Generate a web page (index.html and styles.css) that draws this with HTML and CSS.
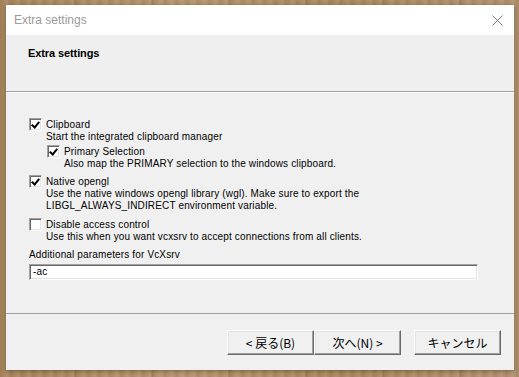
FILE: index.html
```html
<!DOCTYPE html>
<html lang="ja">
<head>
    <meta charset="UTF-8">
    <title>Extra settings</title>
    <link rel="stylesheet" href="styles.css">
</head>
<body>
    <div class="window">
        <!-- Title bar -->
        <div class="titlebar">
            <span class="title">Extra settings</span>
            <svg class="close" width="11" height="11" viewBox="0 0 11 11">
                <path d="M0.5 0.5 L10.5 10.5 M10.5 0.5 L0.5 10.5" stroke="#7a7a7a" stroke-width="1" fill="none"/>
            </svg>
        </div>

        <!-- Wizard header -->
        <div class="header">
            <h1>Extra settings</h1>
        </div>

        <!-- Options -->
        <div class="content">
            <div class="option">
                <span class="check checked"></span>
                <div class="text">
                    <div class="label">Clipboard</div>
                    <div class="desc">Start the integrated clipboard manager</div>
                    <div class="option sub">
                        <span class="check checked"></span>
                        <div class="text">
                            <div class="label">Primary Selection</div>
                            <div class="desc">Also map the PRIMARY selection to the windows clipboard.</div>
                        </div>
                    </div>
                </div>
            </div>

            <div class="option gap">
                <span class="check checked"></span>
                <div class="text">
                    <div class="label">Native opengl</div>
                    <div class="desc">Use the native windows opengl library (wgl). Make sure to export the<br>LIBGL_ALWAYS_INDIRECT environment variable.</div>
                </div>
            </div>

            <div class="option gap">
                <span class="check"></span>
                <div class="text">
                    <div class="label">Disable access control</div>
                    <div class="desc">Use this when you want vcxsrv to accept connections from all clients.</div>
                </div>
            </div>

            <div class="param-label">Additional parameters for VcXsrv</div>
            <div class="input">-ac</div>
        </div>

        <!-- Buttons -->
        <div class="footer">
            <button class="btn">&lt; 戻る(B)</button>
            <button class="btn">次へ(N) &gt;</button>
            <button class="btn cancel">キャンセル</button>
        </div>
    </div>
</body>
</html>
```

FILE: styles.css
```css
body {
    margin: 0;
    height: 377px;
    overflow: hidden;
    background-color: #a9875f;
    background-image:
        repeating-linear-gradient(90deg, rgba(70, 45, 20, 0) 0px, rgba(70, 45, 20, 0) 74px, rgba(70, 45, 20, 0.22) 75px, rgba(70, 45, 20, 0) 77px),
        repeating-linear-gradient(90deg, rgba(90, 60, 30, 0.10) 0px, rgba(90, 60, 30, 0) 3px, rgba(255, 230, 190, 0.10) 7px, rgba(90, 60, 30, 0.08) 11px),
        linear-gradient(90deg, #a5845d, #b39470 35%, #a8875f 65%, #b09170);
    font-family: 'Liberation Sans', Arial, sans-serif;
}
.window {
    margin: 5px 0 0 6px;
    width: 508px;
    height: 365px;
    background: #f0f0f0;
    box-shadow: 0 1px 4px rgba(40, 25, 10, 0.4);
    display: flex;
    flex-direction: column;
}
.titlebar {
    height: 30px;
    background: #ffffff;
    display: flex;
    align-items: center;
    justify-content: space-between;
    padding: 0 11px 0 8px;
}
.title {
    font-size: 12px;
    color: #9a9a9a;
}
.close {
    display: block;
}
.header {
    height: 57px;
    background: #efefef;
    border-bottom: 1px solid #a0a0a0;
    box-shadow: 0 1px 0 #ffffff;
    padding: 12px 0 0 22px;
    box-sizing: border-box;
}
h1 {
    margin: 0;
    font-size: 11px;
    font-weight: 700;
    letter-spacing: -0.1px;
    color: #000;
}
.content {
    height: 222px;
    box-sizing: border-box;
    padding: 26px 0 0 23px;
    border-bottom: 1px solid #a0a0a0;
    font-size: 10px;
    letter-spacing: 0.15px;
    color: #000;
}
.option {
    display: flex;
    align-items: flex-start;
}
.option.sub {
    margin: 2px 0 0 1px;
}
.option.gap {
    margin-top: 5px;
}
.option.gap + .option.gap {
    margin-top: 6px;
}
.text {
    margin-left: 4px;
}
.label {
    line-height: 13px;
}
.desc {
    line-height: 12px;
}
.check {
    flex: none;
    width: 13px;
    height: 13px;
    box-sizing: border-box;
    background: #ffffff;
    border-top: 1px solid #a0a0a0;
    border-left: 1px solid #a0a0a0;
    border-right: 1px solid #ffffff;
    border-bottom: 1px solid #ffffff;
    box-shadow: inset 1px 1px 0 #696969, inset -1px -1px 0 #e3e3e3;
    position: relative;
}
.check.checked::after {
    content: "";
    position: absolute;
    left: 3px;
    top: 1px;
    width: 3px;
    height: 6px;
    border-right: 2px solid #000;
    border-bottom: 2px solid #000;
    transform: rotate(40deg);
}
.param-label {
    margin-top: 6px;
    line-height: 12px;
}
.input {
    margin-top: 3px;
    width: 449px;
    height: 16px;
    box-sizing: border-box;
    background: #ffffff;
    border-top: 1px solid #a0a0a0;
    border-left: 1px solid #a0a0a0;
    border-right: 1px solid #ffffff;
    border-bottom: 1px solid #ffffff;
    box-shadow: inset 1px 1px 0 #696969, inset -1px -1px 0 #e3e3e3;
    padding: 1px 0 0 3px;
    line-height: 12px;
}
.footer {
    display: flex;
    padding: 16px 0 0 221px;
}
.btn {
    width: 87px;
    height: 25px;
    padding: 0;
    background: #f0f0f0;
    font-family: 'Noto Sans CJK JP', 'Liberation Sans', sans-serif;
    font-size: 12px;
    color: #000;
    border-top: 1px solid #ffffff;
    border-left: 1px solid #ffffff;
    border-right: 1px solid #696969;
    border-bottom: 1px solid #696969;
    box-shadow: inset -1px -1px 0 #a0a0a0, inset 1px 1px 0 #e3e3e3;
}
.btn.cancel {
    margin-left: 13px;
}
```
